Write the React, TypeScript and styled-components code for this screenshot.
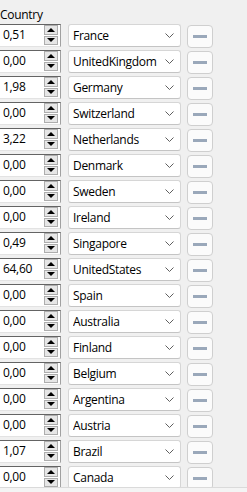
import styled, { createGlobalStyle } from 'styled-components';

const GlobalStyle = createGlobalStyle`
    html, body {
        margin: 0;
        padding: 0;
        background: #f0f0f0;
        overflow: hidden;
    }
`;

const countries = [
    { value: '0,51', name: 'France' },
    { value: '0,00', name: 'UnitedKingdom' },
    { value: '1,98', name: 'Germany' },
    { value: '0,00', name: 'Switzerland' },
    { value: '3,22', name: 'Netherlands' },
    { value: '0,00', name: 'Denmark' },
    { value: '0,00', name: 'Sweden' },
    { value: '0,00', name: 'Ireland' },
    { value: '0,49', name: 'Singapore' },
    { value: '64,60', name: 'UnitedStates' },
    { value: '0,00', name: 'Spain' },
    { value: '0,00', name: 'Australia' },
    { value: '0,00', name: 'Finland' },
    { value: '0,00', name: 'Belgium' },
    { value: '0,00', name: 'Argentina' },
    { value: '0,00', name: 'Austria' },
    { value: '1,07', name: 'Brazil' },
    { value: '0,00', name: 'Canada' },
];

// layout
const Page = styled.div`
    height: 492px;
    font-family: "Open Sans", "Noto Sans", sans-serif;
    font-size: 12px;
    letter-spacing: -0.3px;
    color: #000;
    overflow: hidden;
`;

const Header = styled.div`
    height: 23px;
    line-height: 14px;
    padding-top: 8px;
    box-sizing: border-box;
`;

const List = styled.div`
    display: flex;
    flex-direction: column;
    gap: 3px;
    padding-top: 1px;
`;

const Row = styled.div`
    display: flex;
    align-items: flex-start;
    height: 23px;
`;

// numeric spin box
const SpinBox = styled.div`
    width: 61px;
    height: 23px;
    box-sizing: border-box;
    border-top: 1px solid #646464;
    border-right: 1px solid #a0a0a0;
    border-bottom: 1px solid #e3e3e3;
    background: #fff;
    display: flex;
    align-items: stretch;
`;

const SpinValue = styled.div`
    flex: 1;
    padding-left: 3px;
    line-height: 20px;
`;

const SpinButtons = styled.div`
    width: 14px;
    margin-right: 2px;
    display: flex;
    flex-direction: column;
    gap: 1px;
    padding: 0 0 1px;
`;

const SpinButton = styled.div`
    flex: 1;
    background: #e6e6e6;
    border: 1px solid #adadad;
    display: flex;
    align-items: center;
    justify-content: center;
`;

const Arrow = styled.div<{ $down?: boolean }>`
    width: 0;
    height: 0;
    border-left: 4px solid transparent;
    border-right: 4px solid transparent;
    ${p => p.$down ? 'border-top: 4px solid #000;' : 'border-bottom: 4px solid #000;'}
`;

// drop-down box
const Combo = styled.div`
    margin-left: 7px;
    width: 113px;
    height: 23px;
    box-sizing: border-box;
    background: #fff;
    border: 1px solid #d6d6d6;
    border-bottom-color: #c4c4c4;
    border-radius: 3px;
    display: flex;
    align-items: center;
    padding: 0 6px 0 4px;
`;

const ComboText = styled.span`
    flex: 1;
    white-space: nowrap;
    overflow: hidden;
`;

const RemoveButton = styled.div`
    margin-left: 6px;
    margin-top: 1px;
    width: 26px;
    height: 23px;
    box-sizing: border-box;
    border: 1px solid #cfcfcf;
    border-radius: 4px;
    background: #fbfbfb;
    display: flex;
    align-items: center;
    justify-content: center;
`;

const Bar = styled.div`
    width: 14px;
    height: 3px;
    background: #9aa8ba;
`;

const BottomEdge = styled.div`
    position: fixed;
    left: 0;
    right: 0;
    bottom: 0;
    height: 4px;
    background: #f4f4f4;
    border-top: 1px solid #dadada;
`;

const Chevron = () => (
    <svg width="9" height="6" viewBox="0 0 9 6">
        <path d="M0.5 0.5 L4.5 4.5 L8.5 0.5" fill="none" stroke="#5f5f5f" strokeWidth="1" />
    </svg>
);

const App = (): JSX.Element => {
    return (
        <Page>
            <GlobalStyle />
            <Header>Country</Header>
            <List>
                {countries.map((c, index) => (
                    <Row key={index}>
                        <SpinBox>
                            <SpinValue>{c.value}</SpinValue>
                            <SpinButtons>
                                <SpinButton><Arrow /></SpinButton>
                                <SpinButton><Arrow $down /></SpinButton>
                            </SpinButtons>
                        </SpinBox>
                        <Combo>
                            <ComboText>{c.name}</ComboText>
                            <Chevron />
                        </Combo>
                        <RemoveButton><Bar /></RemoveButton>
                    </Row>
                ))}
            </List>
            <BottomEdge />
        </Page>
    );
};

export default App;
